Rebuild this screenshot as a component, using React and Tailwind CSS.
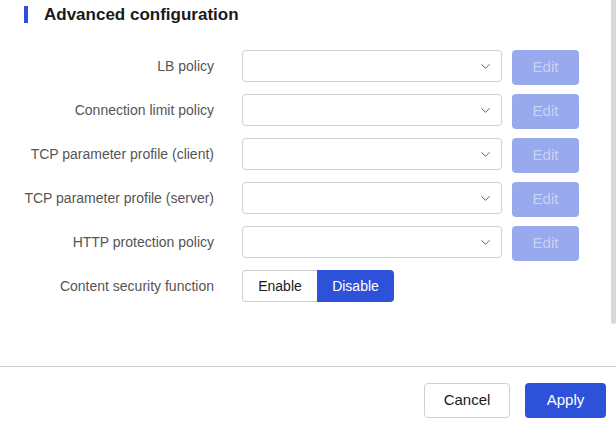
import { ChevronDown } from 'lucide-react'

const rows = [
  'LB policy',
  'Connection limit policy',
  'TCP parameter profile (client)',
  'TCP parameter profile (server)',
  'HTTP protection policy',
]

export default function App() {
  return (
    <div
      className="relative w-[616px] h-[428px] overflow-hidden bg-white flex flex-col"
      style={{ fontFamily: '"Liberation Sans", Arial, sans-serif' }}
    >
      {/* Scrollbar */}
      <div className="absolute right-0 top-0 w-[5px] h-[324px] bg-[#d9d9d9] rounded-b-sm" />

      {/* Body */}
      <div className="h-[366px] shrink-0">
        {/* Section title */}
        <div className="flex items-center h-[18px] mt-[5px] pl-[24px]">
          <div className="w-[4px] h-[17px] bg-[#2d52d9]" />
          <h2 className="ml-[16px] text-[17px] font-bold text-[#1a1a1a] leading-none">
            Advanced configuration
          </h2>
        </div>

        <div className="mt-[27px] flex flex-col gap-[9px]">
          {rows.map((label) => (
            <div key={label} className="flex items-start">
              <label className="w-[214px] text-right text-[14px] leading-[32px] text-[#555]">
                {label}
              </label>
              <div className="ml-[28px] w-[260px] h-[32px] border border-[#cfcfcf] rounded-[4px] flex items-center justify-end pr-[8px]">
                <ChevronDown size={15} strokeWidth={1.5} className="text-[#555]" />
              </div>
              <button className="ml-[10px] w-[67px] h-[35px] rounded-[4px] bg-[#98a9ed] text-[#c9d3f6] text-[15px]">
                Edit
              </button>
            </div>
          ))}

          <div className="flex items-start">
            <label className="w-[214px] text-right text-[14px] leading-[32px] text-[#555]">
              Content security function
            </label>
            <div className="ml-[28px] flex h-[32px]">
              <button className="w-[75px] border border-[#cfcfcf] border-r-0 rounded-l-[4px] text-[14px] text-[#1a1a1a] bg-white">
                Enable
              </button>
              <button className="w-[77px] rounded-r-[4px] bg-[#2d52d9] text-[14px] text-white">
                Disable
              </button>
            </div>
          </div>
        </div>
      </div>

      {/* Footer */}
      <div className="border-t border-[#cccccc] flex-1 flex justify-end items-start pt-[16px] pr-[10px] gap-[15px]">
        <button className="w-[86px] h-[35px] border border-[#cfcfcf] rounded-[4px] text-[15px] text-[#1a1a1a] bg-white">
          Cancel
        </button>
        <button className="w-[81px] h-[35px] rounded-[4px] bg-[#2d52d9] text-[15px] text-white">
          Apply
        </button>
      </div>
    </div>
  )
}
